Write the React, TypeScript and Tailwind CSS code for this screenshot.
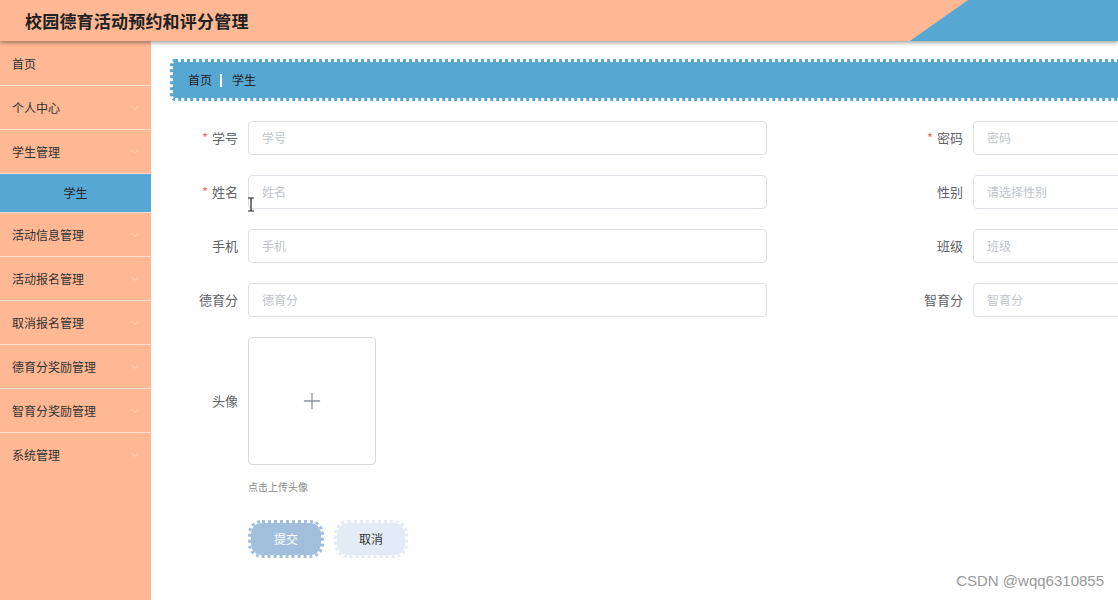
import { ChevronDown, Plus } from "lucide-react";

const menus = [
  { title: "首页", arrow: false },
  { title: "个人中心", arrow: true },
  { title: "学生管理", arrow: true, sub: "学生" },
  { title: "活动信息管理", arrow: true },
  { title: "活动报名管理", arrow: true },
  { title: "取消报名管理", arrow: true },
  { title: "德育分奖励管理", arrow: true },
  { title: "智育分奖励管理", arrow: true },
  { title: "系统管理", arrow: true },
];

const rows = [
  [
    { label: "学号", placeholder: "学号", required: true },
    { label: "密码", placeholder: "密码", required: true },
  ],
  [
    { label: "姓名", placeholder: "姓名", required: true },
    { label: "性别", placeholder: "请选择性别", required: false },
  ],
  [
    { label: "手机", placeholder: "手机", required: false },
    { label: "班级", placeholder: "班级", required: false },
  ],
  [
    { label: "德育分", placeholder: "德育分", required: false },
    { label: "智育分", placeholder: "智育分", required: false },
  ],
];

const Field = ({ label, placeholder, required }: { label: string; placeholder: string; required: boolean }) => (
  <div className="flex items-center h-[34px]">
    <label className="w-[80px] text-right text-[13px] text-[#606266]">
      {required && <span className="text-[#f56c6c] mr-1">*</span>}
      {label}
    </label>
    <div className="ml-[10px] w-[519px] h-[34px] border border-[#dcdfe6] rounded-[4px] bg-white flex items-center px-[13px] text-[12px] text-[#c0c4cc]">
      {placeholder}
    </div>
  </div>
);

export default function App() {
  return (
    <div
      className="w-[1118px] h-[600px] overflow-hidden bg-white flex flex-col relative"
      style={{ fontFamily: '"Microsoft YaHei", "Noto Sans CJK SC", sans-serif' }}
    >
      {/* header */}
      <div className="h-[41px] bg-[#ffb894] relative overflow-hidden shadow-[0_2px_4px_rgba(0,0,0,0.35)] z-10 flex items-center shrink-0">
        <h1 className="ml-[25px] text-[17px] font-bold text-[#222] tracking-[0.2px]">校园德育活动预约和评分管理</h1>
        <svg className="absolute right-0 top-0" width="208" height="41" viewBox="0 0 208 41">
          <polygon points="58,0 208,0 208,41 0,41" fill="#57a7d3" />
        </svg>
      </div>

      <div className="flex flex-1 min-h-0">
        {/* sidebar */}
        <aside className="w-[151px] bg-[#ffb894] shrink-0 pt-[1px]">
          {menus.map((m, i) => (
            <div key={m.title}>
              <div
                className={`h-[44px] flex items-center justify-between pl-[12px] pr-[10px] text-[12px] text-[#333] ${
                  i < menus.length - 1 ? "border-b border-[#ffe1d2]" : ""
                }`}
              >
                <span>{m.title}</span>
                {m.arrow && <ChevronDown size={12} className="text-[#ffd6c2]" />}
              </div>
              {m.sub && (
                <div className="h-[39px] bg-[#57a7d3] flex items-center justify-center text-[12px] text-[#222] border-b border-[#ffe1d2]">
                  {m.sub}
                </div>
              )}
            </div>
          ))}
        </aside>

        {/* main */}
        <main className="flex-1 min-w-0 overflow-hidden pt-[18px]">
          <div className="ml-[19px] w-[1200px] h-[42px] bg-[#57a7d3] bg-clip-padding border-[3px] border-dotted border-[#57a7d3] rounded-[5px] flex items-center pl-[15px] text-[12px] text-[#222]">
            <span>首页</span>
            <span className="ml-[8px] mr-[10px] w-[2px] h-[13px] bg-white" />
            <span>学生</span>
          </div>

          <div className="ml-[7px] mt-[20px] flex flex-col gap-[20px]">
            {rows.map((r, i) => (
              <div key={i} className="grid grid-cols-[725px_725px]">
                <Field {...r[0]} />
                <Field {...r[1]} />
              </div>
            ))}

            <div className="flex items-center">
              <label className="w-[80px] text-right text-[13px] text-[#606266]">头像</label>
              <div className="ml-[10px] w-[128px] h-[128px] border border-[#d9d9d9] rounded-[4px] flex items-center justify-center">
                <Plus size={26} strokeWidth={1.2} className="text-[#8c939d]" />
              </div>
            </div>
          </div>

          <div className="ml-[97px] mt-[14px] text-[10px] text-[#888]">点击上传头像</div>

          <div className="ml-[97px] mt-[26px] flex gap-[10px]">
            <button className="w-[76px] h-[38px] rounded-[14px] bg-[#a1bfdc] bg-clip-padding border-[3px] border-dotted border-[#a1bfdc] text-white text-[12px]">
              提交
            </button>
            <button className="w-[74px] h-[38px] rounded-[14px] bg-[#e3ecf6] bg-clip-padding border-[3px] border-dotted border-[#e3ecf6] text-[#333] text-[12px]">
              取消
            </button>
          </div>
        </main>
      </div>

      {/* text cursor */}
      <svg className="absolute left-[247px] top-[197px]" width="8" height="15" viewBox="0 0 8 15">
        <path d="M1 1h6M4 1v13M1 14h6" stroke="#222" strokeWidth="1.2" fill="none" />
      </svg>

      <div
        className="absolute right-[14px] bottom-[8px] text-[15px] text-[#999]"
        style={{ fontFamily: '"Liberation Sans", Arial, sans-serif' }}
      >
        CSDN @wqq6310855
      </div>
    </div>
  );
}
